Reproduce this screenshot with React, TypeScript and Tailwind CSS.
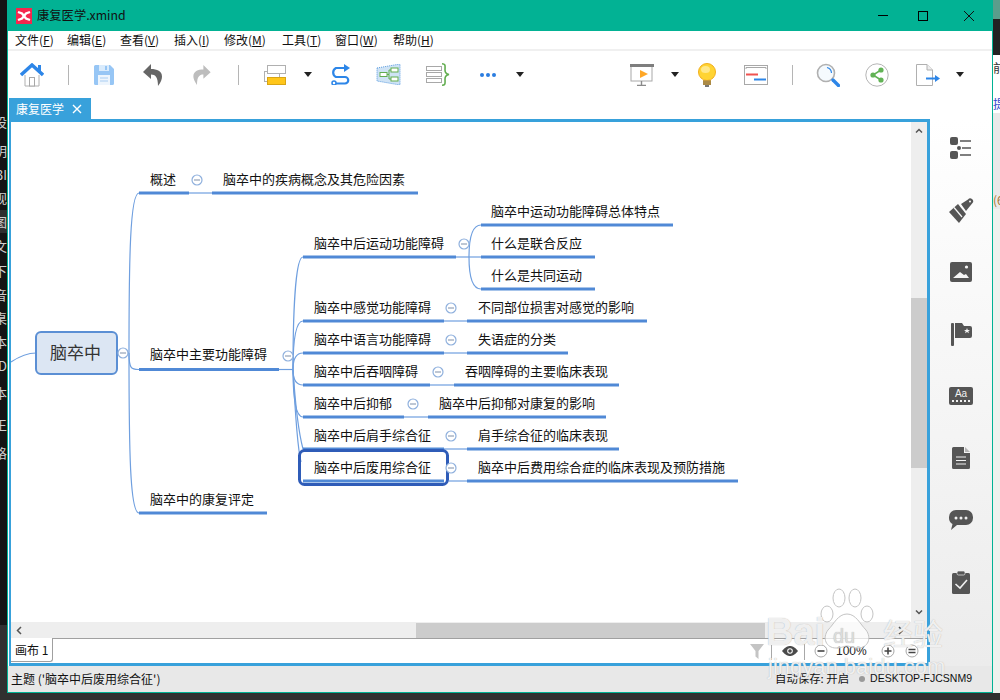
import React from "react";

const FONT = "font-['Noto_Sans_CJK_SC','Noto_Sans',sans-serif]";

function Sep({ ml }: { ml: string }) {
  return <div className={`w-px h-[20px] bg-[#b5b5b5] ${ml}`} />;
}

function Dd({ className }: { className: string }) {
  return (
    <svg width="8" height="5" viewBox="0 0 8 5" className={className}>
      <path d="M0 0H8L4 5Z" fill="#222" />
    </svg>
  );
}

function Toolbar() {
  return (
    <div className="flex items-center h-[47px] bg-white">
      <svg width="24" height="24" viewBox="0 0 24 24" className="ml-[12px]">
        <path d="M5 12V23H19V12" fill="#fff" stroke="#b0b0b0" strokeWidth="1" />
        <rect x="9.5" y="14.5" width="5" height="8.5" fill="#fff" stroke="#a8a8a8" />
        <path d="M1 12L12 2L23 12" fill="none" stroke="#2d86e8" strokeWidth="3.4" />
        <rect x="18" y="2" width="3" height="6" fill="#2d86e8" />
      </svg>
      <Sep ml="ml-[24px]" />
      <svg width="20" height="20" viewBox="0 0 20 20" className="ml-[25px]">
        <path d="M0 1.5A1.5 1.5 0 0 1 1.5 0H16L20 4V18.5A1.5 1.5 0 0 1 18.5 20H1.5A1.5 1.5 0 0 1 0 18.5Z" fill="#97c6f5" />
        <rect x="5" y="0" width="10" height="6" fill="#d9ebfc" />
        <rect x="11" y="1" width="2" height="4" fill="#97c6f5" />
        <rect x="4" y="10" width="12" height="10" fill="#edf5fd" />
        <path d="M6 13H14M6 16H14" stroke="#a9cdf2" strokeWidth="1" />
      </svg>
      <svg width="19" height="22" viewBox="0 0 19 22" className="ml-[29px]">
        <path d="M8 0L0 8L8 15V10.5C12.5 10.5 15 13 15 22C18 18 19 15 19 12.5C19 7 14 5 8 5Z" fill="#666" />
      </svg>
      <svg width="18" height="20" viewBox="0 0 19 22" className="ml-[31px]">
        <path d="M11 0L19 8L11 15V10.5C6.5 10.5 4 13 4 22C1 18 0 15 0 12.5C0 7 5 5 11 5Z" fill="#bdbdbd" />
      </svg>
      <Sep ml="ml-[27px]" />
      <svg width="22" height="20" viewBox="0 0 22 20" className="ml-[25px]">
        <rect x="0.5" y="6.5" width="15" height="10" fill="#fff" stroke="#b0b0b0" />
        <rect x="3.5" y="0.5" width="18" height="8" fill="#fff" stroke="#b0b0b0" />
        <rect x="3.5" y="12.5" width="18" height="7" fill="#ffc61a" stroke="#d9a514" />
      </svg>
      <Dd className="ml-[18px]" />
      <svg width="22" height="21" viewBox="0 0 22 21" className="ml-[17px]">
        <path d="M17 4H7A5 5 0 0 0 7 13H16A3.2 3.2 0 0 1 16 19.5H7" fill="none" stroke="#2d86e8" strokeWidth="2.2" />
        <path d="M15 0L21 4L15 8Z" fill="#2d86e8" />
        <circle cx="5" cy="19" r="2" fill="#fff" stroke="#2d86e8" strokeWidth="1.5" />
      </svg>
      <svg width="25" height="21" viewBox="0 0 25 21" className="ml-[25px]">
        <path d="M1 4L24 0V21L1 17Z" fill="#cfe3f5" stroke="#5a9be0" strokeWidth="1" strokeDasharray="1 1" />
        <rect x="4" y="8.5" width="7" height="4" fill="#fff" stroke="#62ad4f" />
        <rect x="15" y="4" width="7" height="4" fill="#fff" stroke="#62ad4f" />
        <rect x="15" y="13" width="7" height="4" fill="#fff" stroke="#62ad4f" />
        <path d="M11 10.5H13V6H15M13 10.5V15H15" fill="none" stroke="#62ad4f" />
      </svg>
      <svg width="24" height="23" viewBox="0 0 24 23" className="ml-[25px]">
        <rect x="0.5" y="3.5" width="15" height="4" fill="#fff" stroke="#a8a8a8" />
        <rect x="0.5" y="9.5" width="15" height="4" fill="#fff" stroke="#a8a8a8" />
        <rect x="0.5" y="15.5" width="15" height="4" fill="#fff" stroke="#a8a8a8" />
        <path d="M16 0.8C20 0.8 19 3 19 7C19 10 20 11 23 11.5C20 12 19 13 19 16C19 20 20 22.2 16 22.2" fill="none" stroke="#62ad4f" strokeWidth="1.6" />
      </svg>
      <svg width="18" height="6" viewBox="0 0 18 6" className="ml-[29px]">
        <circle cx="3" cy="3" r="2" fill="#2b7de0" />
        <circle cx="9" cy="3" r="2" fill="#2b7de0" />
        <circle cx="15" cy="3" r="2" fill="#2b7de0" />
      </svg>
      <Dd className="ml-[19px]" />
      <svg width="24" height="22" viewBox="0 0 24 22" className="ml-[106px]">
        <rect x="1" y="2" width="21" height="15" fill="#fff" stroke="#a8a8a8" />
        <rect x="0" y="0" width="24" height="3" fill="#7e7e7e" />
        <path d="M10 6L18 10L10 14Z" fill="#ffa726" />
        <path d="M11.5 17V21M7 21.5H16" stroke="#8a8a8a" strokeWidth="1.4" />
      </svg>
      <Dd className="ml-[17px]" />
      <svg width="18" height="24" viewBox="0 0 18 24" className="ml-[19px]">
        <circle cx="9" cy="9" r="8.5" fill="#ffd433" stroke="#f2ae1c" />
        <ellipse cx="7.5" cy="6.5" rx="4.5" ry="3.5" fill="#ffe88a" />
        <rect x="5" y="17" width="8" height="5" fill="#c79a3c" />
        <path d="M5 19H13M5 21H13" stroke="#8f7a50" />
        <rect x="7" y="22" width="4" height="2" fill="#777" />
      </svg>
      <svg width="24" height="20" viewBox="0 0 24 20" className="ml-[28px]">
        <rect x="0.5" y="0.5" width="23" height="19" fill="#fff" stroke="#a8a8a8" />
        <path d="M2 4V2.5H22V4" fill="none" stroke="#a8a8a8" />
        <rect x="2" y="8.5" width="12" height="2" fill="#ef5350" />
        <rect x="10" y="13.5" width="12" height="2" fill="#2d86e8" />
      </svg>
      <Sep ml="ml-[24px]" />
      <svg width="24" height="24" viewBox="0 0 24 24" className="ml-[23px]">
        <circle cx="10" cy="10" r="8.5" fill="#f5fafe" stroke="#b0b0b0" strokeWidth="1.6" />
        <path d="M11 4.5A6 6 0 0 1 15.5 10" fill="none" stroke="#2d86e8" strokeWidth="1.2" />
        <path d="M17 17L22.5 22.5" stroke="#2d86e8" strokeWidth="3.4" strokeLinecap="round" />
      </svg>
      <svg width="24" height="24" viewBox="0 0 24 24" className="ml-[25px]">
        <circle cx="12" cy="12" r="11.2" fill="#fff" stroke="#b5b5b5" strokeWidth="1" />
        <path d="M16 7L8 12L16 17" fill="none" stroke="#62b356" strokeWidth="1.5" />
        <circle cx="16" cy="7" r="2.6" fill="#62b356" />
        <circle cx="8" cy="12" r="2.6" fill="#62b356" />
        <circle cx="16" cy="17" r="2.6" fill="#62b356" />
      </svg>
      <svg width="24" height="22" viewBox="0 0 24 22" className="ml-[27px]">
        <path d="M0.5 0.5H11L16.5 6V21.5H0.5Z" fill="#fff" stroke="#b0b0b0" />
        <path d="M11 0.5V6H16.5" fill="#eee" stroke="#b0b0b0" />
        <path d="M10 14.5H20" stroke="#2d86e8" strokeWidth="2" />
        <path d="M19 11L24 14.5L19 18Z" fill="#2d86e8" />
      </svg>
      <Dd className="ml-[16px]" />
    </div>
  );
}

const ICON = "#555555";

function Slot({ children }: { children: React.ReactNode }) {
  return <div className="h-[22px] flex items-center justify-center">{children}</div>;
}

function Sidebar() {
  return (
    <div className="w-[62px] flex flex-col items-center pt-[18px] gap-[40px] bg-gradient-to-b from-[#ffffff] to-[#ececec]">
      <Slot>
        <svg width="22" height="22" viewBox="0 0 22 22">
          <rect x="0" y="0" width="8" height="8" rx="2" fill={ICON} />
          <rect x="0" y="14" width="8" height="8" rx="2" fill={ICON} />
          <circle cx="9" cy="11" r="2" fill={ICON} />
          <path d="M10 4H21M12 11H21M10 18H21" stroke={ICON} strokeWidth="1.6" />
        </svg>
      </Slot>
      <Slot>
        <svg width="25" height="25" viewBox="0 0 25 25">
          <path d="M0 14L9 6L17 16L10 25Z" fill={ICON} />
          <path d="M5 9.5L13 19" stroke="#f8f8f8" strokeWidth="1.2" />
          <path d="M12 6L19 1.5A2.5 2.5 0 0 1 23.5 5L17 13Z" fill={ICON} />
          <circle cx="21" cy="3.5" r="1" fill="#f8f8f8" />
        </svg>
      </Slot>
      <Slot>
        <svg width="22" height="20" viewBox="0 0 22 20">
          <rect x="0" y="0" width="22" height="20" rx="2" fill={ICON} />
          <path d="M3 16L10 10L14 13L16 12L19 16Z" fill="#f6f6f6" />
          <circle cx="16.5" cy="5" r="1.6" fill="#f6f6f6" />
        </svg>
      </Slot>
      <Slot>
        <svg width="21" height="23" viewBox="0 0 21 23">
          <rect x="0" y="0" width="3" height="23" rx="1" fill={ICON} />
          <path d="M4 0H11L13 3H19A2 2 0 0 1 21 5V13A2 2 0 0 1 19 15H4Z" fill={ICON} />
          <path d="M16 5L16.8 7H19L17.3 8.2L18 10.3L16 9L14 10.3L14.7 8.2L13 7H15.2Z" fill="#f4f4f4" />
        </svg>
      </Slot>
      <Slot>
        <div className="relative w-[24px] h-[18px] rounded-[2px] bg-[#555555] flex justify-center">
          <span className="text-[10px] leading-[13px] text-[#f2f2f2] font-['Liberation_Sans',sans-serif]">Aa</span>
          <span className="absolute left-[3px] right-[3px] bottom-[3px] border-b-2 border-dotted border-[#f2f2f2]" />
        </div>
      </Slot>
      <Slot>
        <svg width="18" height="22" viewBox="0 0 18 22">
          <path d="M1.5 0H12V6H18V20.5A1.5 1.5 0 0 1 16.5 22H1.5A1.5 1.5 0 0 1 0 20.5V1.5A1.5 1.5 0 0 1 1.5 0Z" fill={ICON} />
          <path d="M13 0L18 5H13Z" fill="#b5b5b5" />
          <path d="M4 10H14M4 13.5H14M4 17H14" stroke="#f2f2f2" strokeWidth="1.1" />
        </svg>
      </Slot>
      <Slot>
        <svg width="24" height="20" viewBox="0 0 24 20">
          <path d="M7 0H17A7 7 0 0 1 24 7V8A7 7 0 0 1 17 15H8L2 20L3.5 14A7 7 0 0 1 0 8V7A7 7 0 0 1 7 0Z" fill={ICON} />
          <circle cx="7" cy="8" r="1.5" fill="#f0f0f0" />
          <circle cx="12" cy="8" r="1.5" fill="#f0f0f0" />
          <circle cx="17" cy="8" r="1.5" fill="#f0f0f0" />
        </svg>
      </Slot>
      <Slot>
        <svg width="18" height="23" viewBox="0 0 18 23">
          <rect x="0" y="2" width="18" height="21" rx="1.5" fill={ICON} />
          <rect x="5" y="0" width="8" height="4" rx="1.5" fill={ICON} stroke="#eeeeee" strokeWidth="0.7" />
          <path d="M3.5 13L8 17L15 9" fill="none" stroke="#f0f0f0" strokeWidth="1.6" />
        </svg>
      </Slot>
    </div>
  );
}

type N = { t: string; x: number; y: number };
const labels: N[] = [
  { t: "概述", x: 150, y: 180 },
  { t: "脑卒中的疾病概念及其危险因素", x: 223, y: 180 },
  { t: "脑卒中主要功能障碍", x: 150, y: 355 },
  { t: "脑卒中的康复评定", x: 150, y: 500 },
  { t: "脑卒中后运动功能障碍", x: 314, y: 244 },
  { t: "脑卒中运动功能障碍总体特点", x: 491, y: 212 },
  { t: "什么是联合反应", x: 491, y: 244 },
  { t: "什么是共同运动", x: 491, y: 276 },
  { t: "脑卒中感觉功能障碍", x: 314, y: 308 },
  { t: "不同部位损害对感觉的影响", x: 478, y: 308 },
  { t: "脑卒中语言功能障碍", x: 314, y: 340 },
  { t: "失语症的分类", x: 478, y: 340 },
  { t: "脑卒中后吞咽障碍", x: 314, y: 372 },
  { t: "吞咽障碍的主要临床表现", x: 465, y: 372 },
  { t: "脑卒中后抑郁", x: 314, y: 404 },
  { t: "脑卒中后抑郁对康复的影响", x: 439, y: 404 },
  { t: "脑卒中后肩手综合征", x: 314, y: 436 },
  { t: "肩手综合征的临床表现", x: 478, y: 436 },
  { t: "脑卒中后废用综合征", x: 314, y: 468 },
  { t: "脑卒中后费用综合症的临床表现及预防措施", x: 478, y: 468 },
];

const thick: [number, number, number][] = [
  [139, 189, 193], [212, 418, 193], [139, 279, 369.5], [139, 267, 513],
  [303, 456, 257], [481, 673, 225], [481, 595, 257], [481, 595, 289],
  [303, 444, 321], [467, 647, 321], [303, 444, 353], [467, 568, 353],
  [303, 430, 385], [454, 619, 385], [303, 404, 417], [428, 606, 417],
  [303, 444, 449], [467, 619, 449], [303, 444, 481], [467, 738, 481],
];

const thin = [
  "M11 362C20 356 28 353 36 353",
  "M117 353H129",
  "M129 353C129 260 130 193 139 193",
  "M129 353C129 370 132 369.5 139 369.5",
  "M129 353C129 450 130 513 139 513",
  "M189 193H212",
  "M279 369.5H293",
  "M293 369.5C293 320 295 257 303 257",
  "M293 369.5C293 345 295 321 303 321",
  "M293 369.5C293 360 295 353 303 353",
  "M293 369.5C293 378 295 385 303 385",
  "M293 369.5C293 395 295 417 303 417",
  "M293 369.5C295 400 298 430 303 449",
  "M293 369.5C295 410 298 450 301 462",
  "M456 257H481",
  "M469 257C469 240 472 225 481 225",
  "M469 257C469 274 472 289 481 289",
  "M444 321H467",
  "M444 353H467",
  "M430 385H454",
  "M404 417H428",
  "M444 449H467",
  "M449 481H467",
];

const circles: [number, number][] = [
  [123, 353], [197, 180], [288, 356], [464, 244], [451, 308], [451, 340],
  [438, 372], [413, 404], [451, 436], [451, 468],
];

function MindMap() {
  return (
    <div className={`relative flex-1 h-[500px] bg-white overflow-hidden ${FONT}`}>
      <svg width="900" height="500" viewBox="11 122 900 500" className="absolute left-0 top-0">
        {thin.map((d, i) => (
          <path key={i} d={d} fill="none" stroke="#6f9fdf" strokeWidth="1.2" />
        ))}
        {thick.map(([a, b, y], i) => (
          <path key={i} d={`M${a} ${y}H${b}`} stroke="#5089d6" strokeWidth="3" />
        ))}
        <rect x="299.5" y="450.5" width="148" height="34" rx="5" fill="none" stroke="#2f5cb8" strokeWidth="3" />
        <rect x="36" y="332" width="81" height="42" rx="5" fill="#dce6f3" stroke="#5b8fd4" strokeWidth="2" />
        {circles.map(([x, y], i) => (
          <g key={i}>
            <circle cx={x} cy={y} r="5" fill="#fff" stroke="#8fb0dd" strokeWidth="1.2" />
            <path d={`M${x - 3} ${y}H${x + 3}`} stroke="#7f8fa8" strokeWidth="1" />
          </g>
        ))}
      </svg>
      <div className="absolute left-[25px] top-[209px] w-[79px] h-[42px] flex items-center justify-center text-[17px] text-[#333333]">
        脑卒中
      </div>
      {labels.map((n) => (
        <div
          key={n.t}
          className="absolute h-[20px] leading-[20px] text-[13px] text-[#111111] whitespace-nowrap"
          style={{ left: n.x - 11, top: n.y - 133 }}
        >
          {n.t}
        </div>
      ))}
    </div>
  );
}

function Editor() {
  return (
    <div className="ml-[1px] w-[921px] h-[547px] border-t-[3px] border-b-[3px] border-l-2 border-r-[3px] border-[#38a1db] flex flex-col">
      <div className="flex h-[500px]">
        <MindMap />
        <div className="w-[16px] h-[500px] bg-[#eeeeee] flex flex-col items-center">
          <svg width="8" height="5" viewBox="0 0 8 5" className="mt-[6px]">
            <path d="M1 4.5L4 1.5L7 4.5" fill="none" stroke="#555" strokeWidth="1.5" />
          </svg>
          <div className="w-full h-[170px] mt-[165px] bg-[#cccccc]" />
          <svg width="8" height="5" viewBox="0 0 8 5" className="mt-[142px]">
            <path d="M1 .5L4 3.5L7 .5" fill="none" stroke="#555" strokeWidth="1.5" />
          </svg>
        </div>
      </div>
      <div className="h-[16px] bg-[#eeeeee] flex items-center">
        <svg width="6" height="9" viewBox="0 0 6 9" className="ml-[5px]">
          <path d="M5 1L1.5 4.5L5 8" fill="none" stroke="#555" strokeWidth="1.5" />
        </svg>
        <div className="ml-[394px] w-[349px] h-[15px] bg-[#cccccc]" />
        <svg width="6" height="9" viewBox="0 0 6 9" className="ml-[133px]">
          <path d="M1 1L4.5 4.5L1 8" fill="none" stroke="#555" strokeWidth="1.5" />
        </svg>
      </div>
      <div className="h-[25px] flex bg-white">
        <div className="w-[42px] h-[24px] flex items-center pl-[4px] text-[12px] text-[#111111] border-r border-b border-[#a0a0a0] rounded-br-[3px] whitespace-nowrap">
          画布 1
        </div>
        <div className="flex-1 flex items-center border-t border-[#a0a0a0]">
          <svg width="14" height="15" viewBox="0 0 14 15" className="ml-[697px]">
            <path d="M0 0H14L8.5 7V15L5.5 12.5V7Z" fill="#c4c4c4" />
          </svg>
          <div className="ml-[7px] w-px h-[18px] bg-[#a8a8a8]" />
          <svg width="16" height="10" viewBox="0 0 16 10" className="ml-[10px]">
            <path d="M0 5C3 1 6 0 8 0C10 0 13 1 16 5C13 9 10 10 8 10C6 10 3 9 0 5Z" fill="#4a4a4a" />
            <circle cx="8" cy="5" r="2.8" fill="#fff" />
            <circle cx="8" cy="5" r="1.8" fill="#4a4a4a" />
          </svg>
          <div className="ml-[6px] w-px h-[18px] bg-[#a8a8a8]" />
          <svg width="14" height="14" viewBox="0 0 14 14" className="ml-[9px]">
            <circle cx="7" cy="7" r="6" fill="#fff" stroke="#a8a8a8" />
            <path d="M3.5 7H10.5" stroke="#444" strokeWidth="1.6" />
          </svg>
          <span className="ml-[8px] w-[32px] text-[12px] text-[#222222] font-['Liberation_Sans',sans-serif]">100%</span>
          <svg width="14" height="14" viewBox="0 0 14 14" className="ml-[13px]">
            <circle cx="7" cy="7" r="6" fill="#fff" stroke="#a8a8a8" />
            <path d="M3.5 7H10.5M7 3.5V10.5" stroke="#444" strokeWidth="1.6" />
          </svg>
          <svg width="14" height="14" viewBox="0 0 14 14" className="ml-[10px]">
            <circle cx="7" cy="7" r="6" fill="#fff" stroke="#a8a8a8" />
            <path d="M3.5 5.5H10.5M3.5 8.5H10.5" stroke="#444" strokeWidth="1.5" />
          </svg>
        </div>
      </div>
    </div>
  );
}

function Menu({ a, k, w }: { a: string; k: string; w: string }) {
  return (
    <span className={`${w} whitespace-nowrap`}>
      {a}(<u>{k}</u>)
    </span>
  );
}

const leftChars = [
  { t: "设", c: "h-[32px]" },
  { t: "明", c: "h-[26px]" },
  { t: "3I", c: "h-[22px]" },
  { t: "视", c: "h-[24px]" },
  { t: "图", c: "h-[23px] bg-[#2e2e2e]" },
  { t: "文", c: "h-[25px]" },
  { t: "下", c: "h-[25px]" },
  { t: "音", c: "h-[23px]" },
  { t: "桌", c: "h-[24px]" },
  { t: "本", c: "h-[24px]" },
  { t: "D", c: "h-[24px]" },
  { t: "本", c: "h-[30px]" },
  { t: "王", c: "h-[33px]" },
  { t: "格", c: "h-[24px]" },
];

export default function App() {
  return (
    <div className={`relative w-[1000px] h-[700px] overflow-hidden bg-[#303030] ${FONT}`}>
      <div className="flex h-[693px]">
        <div className="w-[7px] h-[693px] flex flex-col">
          <div className="h-[625px] bg-[#141414] pt-[106px] flex flex-col items-end overflow-hidden">
            {leftChars.map((c, i) => (
              <div key={i} className={`${c.c} w-full flex items-center justify-end text-[13px] leading-[20px] text-[#cfcfcf] overflow-hidden whitespace-nowrap`}>
                <span className="shrink-0">{c.t}</span>
              </div>
            ))}
          </div>
        </div>

        <div className="w-[986px] h-[693px] bg-white border-l border-r border-b border-[#00b294] flex flex-col shrink-0">
          <div className="h-[31px] bg-[#02b294] flex items-center">
            <svg width="16" height="16" viewBox="0 0 16 16" className="ml-[8px]">
              <rect width="16" height="16" fill="#f5274e" />
              <path d="M2 4L6 5.5L8 8L6 10.5L2 12M14 4L10 5.5L8 8L10 10.5L14 12" fill="none" stroke="#fff" strokeWidth="2.4" />
            </svg>
            <span className="ml-[5px] text-[12.3px] text-[#111111] whitespace-nowrap">康复医学.xmind</span>
            <div className="ml-auto flex items-center">
              <div className="w-[10px] h-px bg-black mr-[30px]" />
              <div className="w-[10px] h-[10px] border border-black mr-[36px]" />
              <svg width="10" height="10" viewBox="0 0 10 10" className="mr-[18px]">
                <path d="M0 0L10 10M10 0L0 10" stroke="#111" strokeWidth="1" />
              </svg>
            </div>
          </div>
          <div className="h-[18px] bg-white flex items-center pl-[7px] text-[12px] leading-[18px] text-[#111111]">
            <Menu a="文件" k="F" w="w-[52px]" />
            <Menu a="编辑" k="E" w="w-[53px]" />
            <Menu a="查看" k="V" w="w-[54px]" />
            <Menu a="插入" k="I" w="w-[50px]" />
            <Menu a="修改" k="M" w="w-[58px]" />
            <Menu a="工具" k="T" w="w-[53px]" />
            <Menu a="窗口" k="W" w="w-[58px]" />
            <Menu a="帮助" k="H" w="w-[50px]" />
          </div>
          <div className="h-[2px] bg-[#f0f0f0]" />
          <Toolbar />
          <div className="h-[21px] bg-white flex pl-[1px]">
            <div className="w-[82px] h-[21px] bg-[#38a1db] flex items-center text-white text-[12px] pl-[7px]">
              <span>康复医学</span>
              <svg width="10" height="10" viewBox="0 0 10 10" className="ml-[8px]">
                <path d="M1 1L9 9M9 1L1 9" stroke="#fff" strokeWidth="1.4" />
              </svg>
            </div>
          </div>
          <div className="flex">
            <Editor />
            <Sidebar />
          </div>
          <div className="h-[26px] bg-[#e8e8e8] flex items-center text-[12px] text-[#111111] whitespace-nowrap">
            <span className="ml-[3px]">主题 ('脑卒中后废用综合征')</span>
            <span className="ml-auto text-[11.4px]">自动保存: 开启</span>
            <span className="ml-[10px] w-[6px] h-[6px] rounded-full bg-[#9a9a9a]" />
            <span className="ml-[5px] mr-[20px] text-[10.5px] font-['Liberation_Sans',sans-serif]">DESKTOP-FJCSNM9</span>
          </div>
        </div>

        <div className="w-[7px] h-[693px] flex flex-col text-[12px] overflow-hidden">
          <div className="h-[19px] bg-[#5a9d8c]" />
          <div className="h-[36px] bg-[#222222]" />
          <div className="h-[22px] bg-[#ffffff] flex items-end whitespace-nowrap text-[#333333]">前</div>
          <div className="h-[36px] bg-[#ffffff] flex items-end whitespace-nowrap text-[#3344cc]">提</div>
          <div className="h-[78px] bg-[#e9e9e9]" />
          <div className="h-[18px] bg-[#e9e9e9] flex items-center whitespace-nowrap text-[#aa7733]">(6</div>
          <div className="flex-1 bg-[#eef2ee]" />
        </div>
      </div>

      <div className="absolute left-[766px] top-[588px] w-[182px] h-[96px] text-[#ffffffd0] pointer-events-none [text-shadow:0_0_1px_#aaaaaa]">
        <svg width="56" height="64" viewBox="0 0 56 64" className="absolute left-[52px] top-[0px]">
          <g fill="#ffffff" fillOpacity="0.7" stroke="#c4c4c4" strokeWidth="1">
            <ellipse cx="9" cy="26" rx="6" ry="8" />
            <ellipse cx="21" cy="10" rx="6" ry="9" />
            <ellipse cx="37" cy="10" rx="6" ry="9" />
            <ellipse cx="49" cy="26" rx="6" ry="8" />
            <path d="M29 26C38 26 42 36 48 42C54 50 50 60 40 60C34 60 32 58 29 58C26 58 24 60 18 60C8 60 4 50 10 42C16 36 20 26 29 26Z" />
          </g>
        </svg>
        <span className="absolute left-[0px] top-[22px] text-[38px] leading-[44px] font-bold font-['Liberation_Sans',sans-serif]">Bai</span>
        <span className="absolute left-[67px] top-[36px] text-[20px] leading-[24px] text-[#dddddd] font-['Liberation_Sans',sans-serif]">du</span>
        <span className="absolute left-[117px] top-[27px] text-[30px] leading-[34px]">经验</span>
        <span className="absolute left-[2px] top-[65px] text-[22px] leading-[28px] font-['Liberation_Sans',sans-serif]">jingyan.baidu.com</span>
      </div>
    </div>
  );
}
